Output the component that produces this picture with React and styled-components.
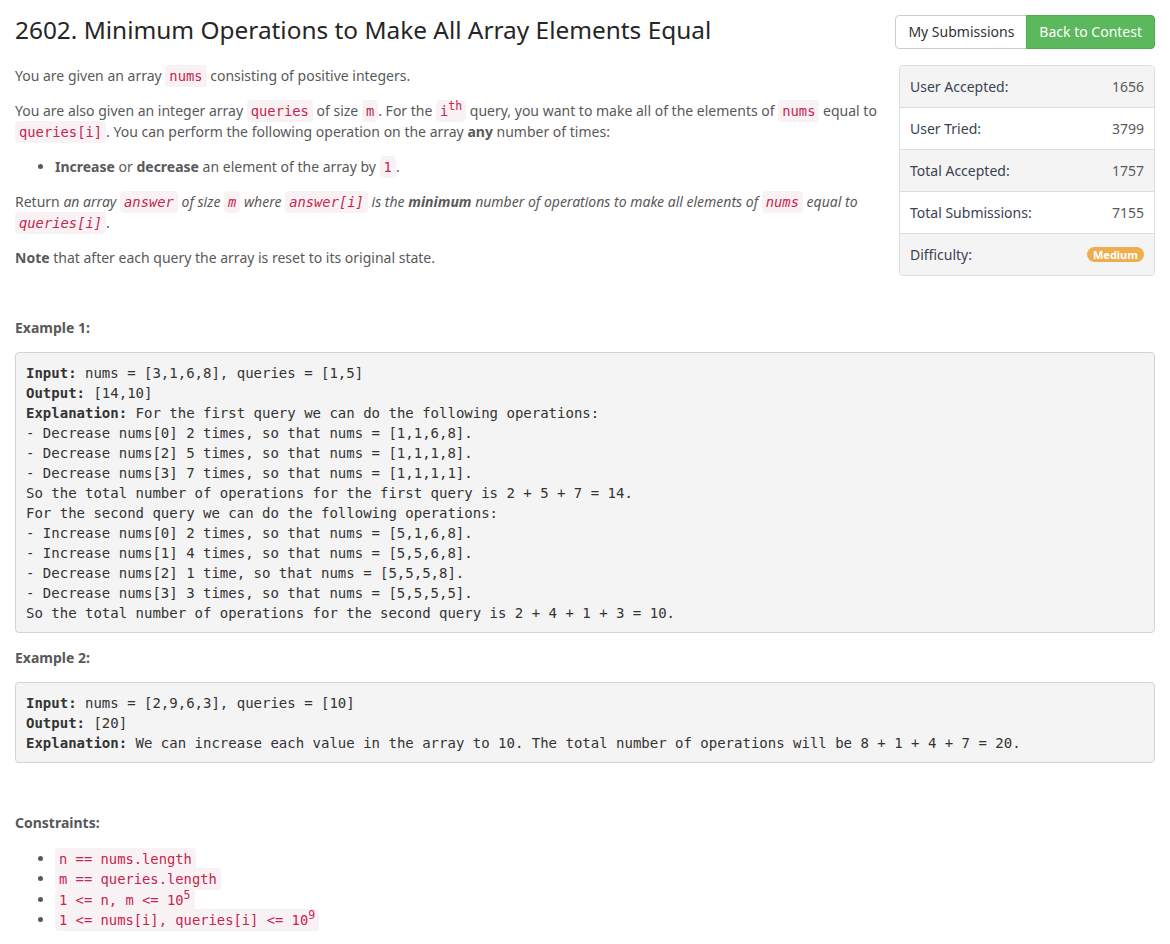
import React from 'react'
import styled, { createGlobalStyle } from 'styled-components'

const GlobalStyle = createGlobalStyle`
  body {
    margin: 0;
    background: #fff;
    font-family: "Noto Sans", "Open Sans", sans-serif;
    font-size: 14px;
    color: #595959;
  }
`;

const Page = styled.div`
  padding: 15px 15px 20px;
`;
const Header = styled.div`
  display: flex;
  justify-content: space-between;
  align-items: flex-start;
  margin-bottom: 16px;
`;
const Title = styled.h1`
  margin: 0;
  font-size: 24.4px;
  font-weight: 400;
  line-height: 29px;
  color: #262626;
`;
const ButtonGroup = styled.div`
  display: flex;
`;
const Button = styled.a`
  display: block;
  height: 34px;
  box-sizing: border-box;
  padding: 0 12px;
  font-size: 14px;
  line-height: 32px;
  border: 1px solid ${p => (p.$primary ? '#4cae4c' : '#ccc')};
  background: ${p => (p.$primary ? '#5cb85c' : '#fff')};
  color: ${p => (p.$primary ? '#fff' : '#333')};
  border-radius: ${p => (p.$primary ? '0 4px 4px 0' : '4px 0 0 4px')};
  ${p => (p.$primary ? 'margin-left: -1px;' : '')}
  cursor: pointer;
`;

const Sidebar = styled.div`
  float: right;
  width: 254px;
  margin-left: 21px;
  border: 1px solid #ddd;
  border-radius: 4px;
  overflow: hidden;
`;
const StatRow = styled.div`
  display: flex;
  justify-content: space-between;
  align-items: center;
  padding: 10px;
  line-height: 21px;
  background: ${p => (p.$shade ? '#f4f4f4' : '#fff')};
  & + & {
    border-top: 1px solid #ddd;
  }
`;
const StatLabel = styled.span`
  color: #3b4252;
`;
const StatValue = styled.span`
  color: #595959;
`;
const Badge = styled.span`
  display: inline-block;
  background: #f0ad4e;
  color: #fff;
  font-size: 11px;
  font-weight: 700;
  line-height: 15px;
  padding: 0 6px;
  border-radius: 10px;
`;

const Para = styled.p`
  margin: 0 0 14px;
  line-height: 21px;
`;
const Code = styled.code`
  font-family: "DejaVu Sans Mono", "Liberation Mono", monospace;
  font-size: 13.8px;
  color: #c7254e;
  background: #f9f2f4;
  padding: 3px 4px;
  border-radius: 4px;
  line-height: 1;
`;
const List = styled.ul`
  margin: 0 0 14px;
  padding-left: 40px;
  padding-top: ${p => (p.$tight ? '2px' : '0')};
  line-height: ${p => (p.$tight ? '20.3px' : '21px')};
`;
const Pre = styled.pre`
  margin: 0 0 14px;
  padding: 9.5px 10px;
  background: #f4f4f4;
  border: 1px solid #d4d4d4;
  border-radius: 4px;
  font-family: "DejaVu Sans Mono", "Liberation Mono", monospace;
  font-size: 14px;
  line-height: 20px;
  color: #333;
  white-space: pre-wrap;
`;

const stats = [
  ['User Accepted:', '1656'],
  ['User Tried:', '3799'],
  ['Total Accepted:', '1757'],
  ['Total Submissions:', '7155'],
]

export default function App() {
  return (
    <Page>
      <GlobalStyle />
      <Header>
        <Title>2602. Minimum Operations to Make All Array Elements Equal</Title>
        <ButtonGroup>
          <Button>My Submissions</Button>
          <Button $primary>Back to Contest</Button>
        </ButtonGroup>
      </Header>

      <Sidebar>
        {stats.map(([label, value], i) => (
          <StatRow key={label} $shade={i % 2 === 0}>
            <StatLabel>{label}</StatLabel>
            <StatValue>{value}</StatValue>
          </StatRow>
        ))}
        <StatRow $shade>
          <StatLabel>Difficulty:</StatLabel>
          <Badge>Medium</Badge>
        </StatRow>
      </Sidebar>

      <Para>You are given an array <Code>nums</Code> consisting of positive integers.</Para>
      <Para>
        You are also given an integer array <Code>queries</Code> of size <Code>m</Code>. For the{' '}
        <Code>i<sup>th</sup></Code> query, you want to make all of the elements of <Code>nums</Code> equal
        to <Code>queries[i]</Code>. You can perform the following operation on the array <strong>any</strong> number
        of times:
      </Para>
      <List>
        <li><strong>Increase</strong> or <strong>decrease</strong> an element of the array by <Code>1</Code>.</li>
      </List>
      <Para>
        Return <em>an array <Code>answer</Code> of size <Code>m</Code> where <Code>answer[i]</Code> is
        the <strong>minimum</strong> number of operations to make all elements of <Code>nums</Code> equal
        to <Code>queries[i]</Code></em>.
      </Para>
      <Para><strong>Note</strong> that after each query the array is reset to its original state.</Para>
      <Para>&nbsp;</Para>

      <Para><strong>Example 1:</strong></Para>
      <Pre>
<strong>Input:</strong> nums = [3,1,6,8], queries = [1,5]{'\n'}
<strong>Output:</strong> [14,10]{'\n'}
<strong>Explanation:</strong> For the first query we can do the following operations:{'\n'}
{`- Decrease nums[0] 2 times, so that nums = [1,1,6,8].
- Decrease nums[2] 5 times, so that nums = [1,1,1,8].
- Decrease nums[3] 7 times, so that nums = [1,1,1,1].
So the total number of operations for the first query is 2 + 5 + 7 = 14.
For the second query we can do the following operations:
- Increase nums[0] 2 times, so that nums = [5,1,6,8].
- Increase nums[1] 4 times, so that nums = [5,5,6,8].
- Decrease nums[2] 1 time, so that nums = [5,5,5,8].
- Decrease nums[3] 3 times, so that nums = [5,5,5,5].
So the total number of operations for the second query is 2 + 4 + 1 + 3 = 10.`}
      </Pre>

      <Para><strong>Example 2:</strong></Para>
      <Pre>
<strong>Input:</strong> nums = [2,9,6,3], queries = [10]{'\n'}
<strong>Output:</strong> [20]{'\n'}
<strong>Explanation:</strong> We can increase each value in the array to 10. The total number of operations will be 8 + 1 + 4 + 7 = 20.
      </Pre>
      <Para>&nbsp;</Para>

      <Para><strong>Constraints:</strong></Para>
      <List $tight>
        <li><Code>n == nums.length</Code></li>
        <li><Code>m == queries.length</Code></li>
        <li><Code>1 &lt;= n, m &lt;= 10<sup>5</sup></Code></li>
        <li><Code>1 &lt;= nums[i], queries[i] &lt;= 10<sup>9</sup></Code></li>
      </List>
    </Page>
  )
}
